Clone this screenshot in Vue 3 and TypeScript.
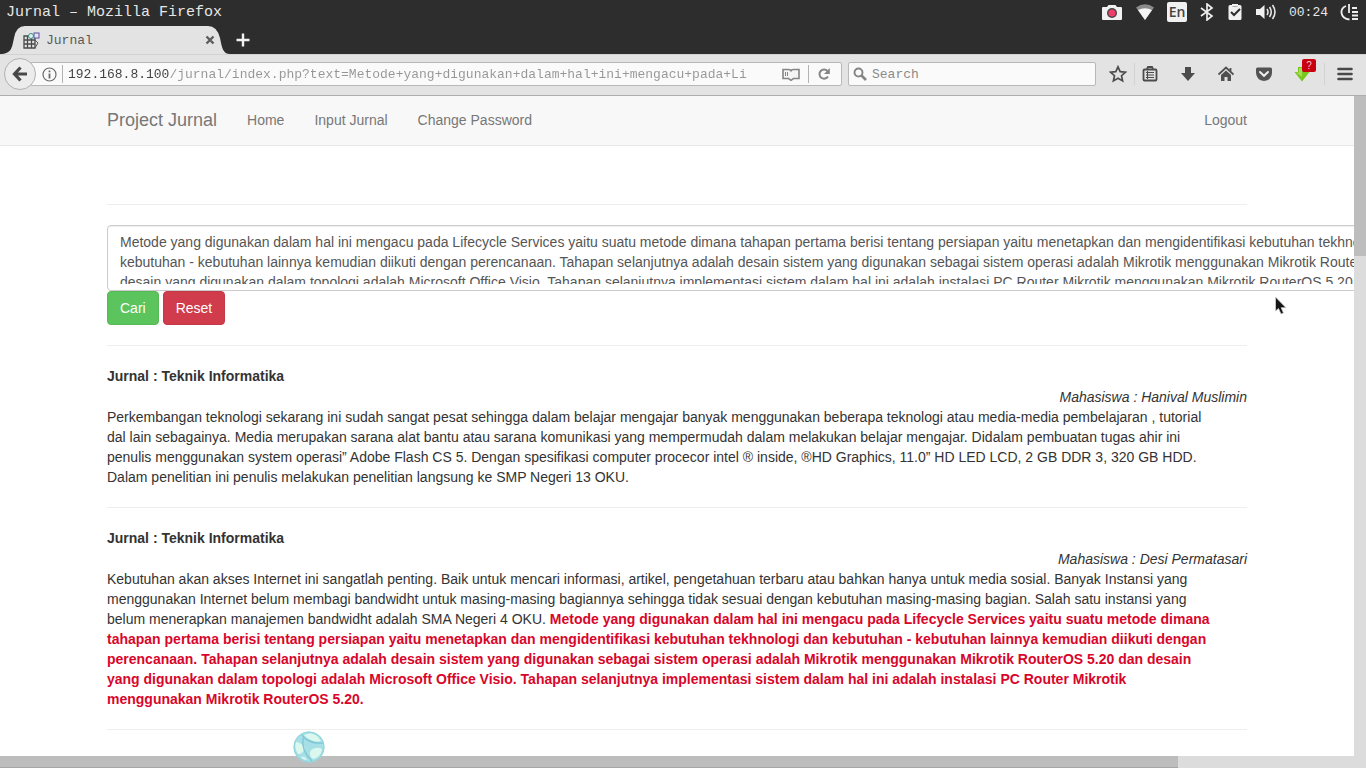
<script setup lang="ts">
import { ref } from 'vue'

interface Journal {
  title: string
  student: string
  text: string
  match?: string
}

const address = ref('192.168.8.100/jurnal/index.php?text=Metode+yang+digunakan+dalam+hal+ini+mengacu+pada+Li')
const search = ref('')
const query = ref(`Metode yang digunakan dalam hal ini mengacu pada Lifecycle Services yaitu suatu metode dimana tahapan pertama berisi tentang persiapan yaitu menetapkan dan mengidentifikasi kebutuhan tekhnologi dan
kebutuhan - kebutuhan lainnya kemudian diikuti dengan perencanaan. Tahapan selanjutnya adalah desain sistem yang digunakan sebagai sistem operasi adalah Mikrotik menggunakan Mikrotik RouterOS 5.20 dan
desain yang digunakan dalam topologi adalah Microsoft Office Visio. Tahapan selanjutnya implementasi sistem dalam hal ini adalah instalasi PC Router Mikrotik menggunakan Mikrotik RouterOS 5.20.`)

const links = ['Home', 'Input Jurnal', 'Change Password']

const journals: Journal[] = [
  {
    title: 'Jurnal : Teknik Informatika',
    student: 'Mahasiswa : Hanival Muslimin',
    text: `Perkembangan teknologi sekarang ini sudah sangat pesat sehingga dalam belajar mengajar banyak menggunakan beberapa teknologi atau media-media pembelajaran , tutorial
dal lain sebagainya. Media merupakan sarana alat bantu atau sarana komunikasi yang mempermudah dalam melakukan belajar mengajar. Didalam pembuatan tugas ahir ini
penulis menggunakan system operasi” Adobe Flash CS 5. Dengan spesifikasi computer procecor intel ® inside, ®HD Graphics, 11.0” HD LED LCD, 2 GB DDR 3, 320 GB HDD.
Dalam penelitian ini penulis melakukan penelitian langsung ke SMP Negeri 13 OKU.`,
  },
  {
    title: 'Jurnal : Teknik Informatika',
    student: 'Mahasiswa : Desi Permatasari',
    text: `Kebutuhan akan akses Internet ini sangatlah penting. Baik untuk mencari informasi, artikel, pengetahuan terbaru atau bahkan hanya untuk media sosial. Banyak Instansi yang
menggunakan Internet belum membagi bandwidht untuk masing-masing bagiannya sehingga tidak sesuai dengan kebutuhan masing-masing bagian. Salah satu instansi yang
belum menerapkan manajemen bandwidht adalah SMA Negeri 4 OKU.`,
    match: `Metode yang digunakan dalam hal ini mengacu pada Lifecycle Services yaitu suatu metode dimana
tahapan pertama berisi tentang persiapan yaitu menetapkan dan mengidentifikasi kebutuhan tekhnologi dan kebutuhan - kebutuhan lainnya kemudian diikuti dengan
perencanaan. Tahapan selanjutnya adalah desain sistem yang digunakan sebagai sistem operasi adalah Mikrotik menggunakan Mikrotik RouterOS 5.20 dan desain
yang digunakan dalam topologi adalah Microsoft Office Visio. Tahapan selanjutnya implementasi sistem dalam hal ini adalah instalasi PC Router Mikrotik
menggunakan Mikrotik RouterOS 5.20.`,
  },
]
</script>

<template>
  <div class="window">
    <header class="panel">
      <span class="panel-title">Jurnal – Mozilla Firefox</span>
      <div class="indicators">
        <svg width="22" height="18" viewBox="0 0 22 18">
          <path d="M2 4h4l1.500-2h7L16 4h4q1 0 1 1v11q0 1-1 1H2q-1 0-1-1V5q0-1 1-1z" fill="#f1f1f1" />
          <circle cx="11" cy="10" r="5" fill="#444" />
          <circle cx="11" cy="10" r="3.600" fill="#ee3f6b" />
        </svg>
        <svg width="20" height="18" viewBox="0 0 20 18">
          <path d="M1 4.500Q10-2 19 4.500L10 17z" fill="#8b8b8b" />
          <path d="M3 7Q10 3.500 17 7L10 17z" fill="#f4f4f4" />
        </svg>
        <span class="keyboard">En</span>
        <svg width="16" height="18" viewBox="0 0 16 18" fill="none" stroke="#eee" stroke-width="1.700">
          <path d="M2 5l11 8-5 4V1l5 4-11 8" />
        </svg>
        <svg width="16" height="18" viewBox="0 0 16 18">
          <path d="M3 2h2V1h6v1h2q1.500 0 1.500 1.500v12Q14.500 17 13 17H3q-1.500 0-1.500-1.500v-12Q1.500 2 3 2z" fill="#f1f1f1" />
          <path d="M4 9l3 3 6-6" fill="none" stroke="#2d2d2d" stroke-width="2" />
          <path d="M5.500 3.500h5" stroke="#aaa" />
        </svg>
        <svg width="22" height="18" viewBox="0 0 22 18">
          <path d="M1 6h4l4.500-4v14L5 12H1z" fill="#f1f1f1" />
          <path d="M12 6q2 3 0 6M14.500 4q3.500 5 0 10M17.500 2q5 7 0 14" fill="none" stroke="#e4e4e4" stroke-width="1.600" />
        </svg>
        <time class="clock">00:24</time>
        <svg width="20" height="18" viewBox="0 0 20 18" fill="none" stroke="#eee" stroke-width="1.800">
          <path d="M6 3Q1 5 1.500 10q1 6 8 6.500M9 1v9M12 5h5M12 9h6M12 12.500h6M12 16h6" />
        </svg>
      </div>
    </header>

    <div class="tabs">
      <div class="tab">
        <svg class="tab-shape" width="230" height="28" viewBox="0 0 230 28" preserveAspectRatio="none">
          <path d="M0 28C12 28 12 21 14 12Q16 0 25 0H208Q217 0 220 12C222 22 223 28 230 28z" fill="#e3e3e3" />
        </svg>
        <svg class="favicon" width="17" height="17" viewBox="0 0 17 17" fill="none">
          <path d="M1 4h11v12H1zM1 8h11M1 12h11M4.500 4v12M8.500 4v12" stroke="#4a4a4a" stroke-width="1.300" />
          <rect x="11" y="1" width="5" height="5" fill="#e6e3f5" stroke="#58519c" />
          <circle cx="8" cy="4" r="2.500" fill="#d9f0ed" stroke="#3c8f86" />
          <path d="M12 8l3 3-3 5" stroke="#555" />
        </svg>
        <span class="tab-title">Jurnal</span>
        <button class="plain" aria-label="Close tab">
          <svg width="10" height="10" viewBox="0 0 10 10" stroke="#5d5d5d" stroke-width="2.400"><path d="M1.500 1.500l7 7M8.500 1.500l-7 7" /></svg>
        </button>
      </div>
      <button class="plain" aria-label="New tab">
        <svg width="14" height="14" viewBox="0 0 14 14" stroke="#f2f2f2" stroke-width="2.400"><path d="M7 0.500v13M0.500 7h13" /></svg>
      </button>
    </div>

    <div class="toolbar">
      <button class="back" aria-label="Back">
        <svg width="16" height="16" viewBox="0 0 16 16" fill="none" stroke="#484848" stroke-width="3.200"><path d="M15 8H3M8.500 1.500L2.500 8l6 6.500" /></svg>
      </button>
      <div class="address">
        <svg width="15" height="15" viewBox="0 0 15 15" fill="none" stroke="#6c6c6c">
          <circle cx="7.500" cy="7.500" r="6.500" stroke-width="1.200" />
          <path d="M7.500 6.500v5M7.500 3.500v1.800" stroke-width="1.800" />
        </svg>
        <span class="rule"></span>
        <input v-model="address" class="url" aria-label="Address" />
        <svg width="18" height="13" viewBox="0 0 18 13" fill="#f4f4f4" stroke="#858585" stroke-width="1.600">
          <path d="M1 1.500h5.500Q9 1.500 9 3.500q0-2 2.500-2H17v9h-5.500L9 12.300 6.500 10.500H1z" />
          <path d="M3.500 4v4M5.500 4v4" stroke-width="1" />
        </svg>
        <span class="rule short"></span>
        <button class="plain" aria-label="Reload">
          <svg width="14" height="14" viewBox="0 0 14 14" fill="none"><path d="M11 9.500A4.600 4.600 0 1 1 10.500 4" stroke="#858585" stroke-width="2" /><path d="M12.800 1v6H7z" fill="#858585" /></svg>
        </button>
      </div>
      <div class="search">
        <svg width="14" height="14" viewBox="0 0 14 14" fill="none" stroke="#858585"><circle cx="5.500" cy="5.500" r="4" stroke-width="1.900" /><path d="M8.500 8.500l4.500 4.500" stroke-width="2.600" /></svg>
        <input v-model="search" placeholder="Search" aria-label="Search" />
      </div>
      <div class="tools">
        <button class="plain" aria-label="Bookmark">
          <svg width="18" height="18" viewBox="0 0 18 18" fill="none" stroke="#4c4c4c" stroke-width="1.700"><path d="M9 1.800l2.200 4.800 5.200.6-3.900 3.500 1.100 5.200L9 13.300l-4.600 2.600 1.100-5.200L1.600 7.200l5.200-.6z" /></svg>
        </button>
        <span class="divider"></span>
        <button class="plain" aria-label="Bookmarks list">
          <svg width="16" height="16" viewBox="0 0 16 16" fill="none" stroke="#4c4c4c"><rect x="1.500" y="3.500" width="13" height="11" rx="1" stroke-width="1.800" /><path d="M5 3l1-2h4l1 2" stroke-width="1.800" /><path d="M4 6.500h8M4 9h8M4 11.500h8M5.500 5v8" stroke-width="1.100" /></svg>
        </button>
        <button class="plain" aria-label="Downloads">
          <svg width="16" height="16" viewBox="0 0 16 16" fill="#4c4c4c"><path d="M5 1h6v6h4L8 15 1 7h4z" /></svg>
        </button>
        <button class="plain" aria-label="Home page">
          <svg width="16" height="16" viewBox="0 0 16 16"><path d="M.5 8.500L8 1.500l7.500 7M12.500 2v3" fill="none" stroke="#505050" stroke-width="1.800" /><path d="M3 9l5-4.500L13 9v6H9.500v-4h-3v4H3z" fill="#505050" /></svg>
        </button>
        <button class="plain" aria-label="Pocket">
          <svg width="16" height="16" viewBox="0 0 16 16"><path d="M1.500 1.500h13q1.500 0 1.500 1.500v4q-.5 7-8 8-7.500-1-8-8V3q0-1.500 1.500-1.500z" fill="#535353" /><path d="M4 6l4 3.800L12 6" fill="none" stroke="#eee" stroke-width="2" stroke-linecap="round" /></svg>
        </button>
        <button class="plain addon" aria-label="Download helper">
          <svg width="16" height="16" viewBox="0 0 16 16"><path d="M4 1h8v5h3.500L8 15.500.5 6H4z" fill="#78c51c" /><path d="M5 2h3v9L2 6.500h3z" fill="#a5dd58" /></svg>
          <span class="badge">?</span>
        </button>
        <button class="plain menu" aria-label="Menu">
          <svg width="16" height="14" viewBox="0 0 16 14" stroke="#484848" stroke-width="2.600" stroke-linecap="round"><path d="M1.500 2h13M1.500 7h13M1.500 12h13" /></svg>
        </button>
      </div>
    </div>

    <div class="view">
      <main class="page">
        <nav class="navbar">
          <div class="container nav-row">
            <a class="brand" href="#">Project Jurnal</a>
            <a v-for="link in links" :key="link" href="#">{{ link }}</a>
            <a class="logout" href="#">Logout</a>
          </div>
        </nav>
        <div class="container body">
          <hr />
          <form @submit.prevent>
            <div class="query">
              <textarea v-model="query" wrap="off" aria-label="Teks"></textarea>
            </div>
            <div class="actions">
              <button class="btn green" type="submit">Cari</button>
              <button class="btn red" type="button" @click="query = ''">Reset</button>
            </div>
          </form>
          <hr />
          <template v-for="(item, i) in journals" :key="i">
            <article>
              <h2>{{ item.title }}</h2>
              <p class="student">{{ item.student }}</p>
              <p class="abstract">{{ item.text }} <b v-if="item.match">{{ item.match }}</b></p>
            </article>
            <hr />
          </template>
        </div>
      </main>
      <div class="vbar"><div class="vthumb"></div></div>
      <div class="hbar"><div class="hthumb"></div></div>
    </div>

    <svg class="globe" width="34" height="34" viewBox="0 0 34 34">
      <circle cx="17" cy="17" r="15.500" fill="#a6e0e6" />
      <path d="M12 5q8-4 14 2l3 4q-6 2-10-1-5-2-7-5zM4 12q6 1 9 6-2 6-7 6-4-6-2-12zM19 20q6-4 11-1-1 8-9 10-5-3-2-9zM9 27q4-1 6 3-4 0-6-3z" fill="#dcf8ee" />
      <path d="M10 5q6 9 21 8M11 8Q9 21 20 31" fill="none" stroke="#7fc6d6" stroke-width="1.400" />
      <circle cx="17" cy="17" r="15" fill="none" stroke="#8fd3dc" />
    </svg>
    <svg class="cursor" width="14" height="20" viewBox="0 0 14 20">
      <path d="M1.500 1v14l3-2.500 2.500 5.500 2.500-1-2.300-5.300H12z" fill="#161616" stroke="#d0d0d0" stroke-width=".8" />
    </svg>
  </div>
</template>

<style>
body {
  margin: 0;
  overflow: hidden;
}
</style>

<style scoped>
* {
  box-sizing: border-box;
}
.window {
  position: relative;
  display: flex;
  flex-direction: column;
  height: 100vh;
  overflow: hidden;
  background: #fff;
  color: #333;
  font: 14px/20px "Liberation Sans", Arial, sans-serif;
}
svg {
  display: block;
  flex: none;
}
.plain {
  display: flex;
  padding: 0;
  border: 0;
  background: none;
}
.panel {
  display: flex;
  align-items: center;
  justify-content: space-between;
  height: 26px;
  padding: 0 6px 2px;
  background: #2d2d2d;
  color: #e6e6e6;
  font-family: "Liberation Mono", monospace;
}
.panel-title,
.tab-title,
.clock {
  padding-top: 2px;
}
.panel-title {
  font-size: 15px;
}
.indicators {
  display: flex;
  align-items: center;
  gap: 12px;
}
.keyboard {
  width: 20px;
  border-radius: 2px;
  background: #f1f1f1;
  color: #444;
  font: 600 14px/20px "Open Sans", sans-serif;
  text-align: center;
}
.clock {
  font-size: 13px;
}
.tabs {
  display: flex;
  align-items: center;
  gap: 6px;
  height: 28px;
  background: #2d2d2d;
}
.tab {
  position: relative;
  display: flex;
  align-items: center;
  gap: 6px;
  width: 230px;
  height: 28px;
  padding: 0 15px 0 23px;
  color: #5a5a5a;
  font-family: "Liberation Mono", monospace;
  font-size: 13px;
}
.tab-shape {
  position: absolute;
  inset: 0;
}
.favicon,
.tab-title,
.tab .plain {
  position: relative;
}
.tab-title {
  flex: 1;
}
.toolbar {
  display: flex;
  align-items: center;
  height: 42px;
  padding: 0 13px 2px 4px;
  border-top: 1px solid #d2d2d2;
  border-bottom: 1px solid #adadad;
  background: #e3e3e3;
}
.back {
  z-index: 1;
  display: flex;
  align-items: center;
  justify-content: center;
  width: 32px;
  height: 32px;
  padding: 0;
  border: 1px solid #b1b1b1;
  border-radius: 50%;
  background: #ececec;
}
.address,
.search {
  display: flex;
  align-items: center;
  height: 24px;
  border: 1px solid #b8b8b8;
  border-radius: 2px;
  background: #fafafa;
}
.address {
  flex: 1;
  gap: 5px;
  margin: 0 6px 0 -6px;
  padding: 0 10px 0 11px;
}
.rule {
  width: 1px;
  height: 18px;
  background: #b3b3b3;
}
.rule.short {
  margin: 0 3px;
}
input {
  min-width: 0;
  flex: 1;
  padding: 2px 0 0;
  border: 0;
  outline: 0;
  background: none;
  font: 13px/20px "Liberation Mono", monospace;
  color: #555;
}
.url {
  background: linear-gradient(90deg, #3f3f3f 101px, #969696 101px);
  background-clip: text;
  -webkit-text-fill-color: transparent;
}
.search {
  flex: 0 1 248px;
  gap: 5px;
  padding: 0 4px;
}
input::placeholder {
  color: #8a8a8a;
  opacity: 1;
}
.tools {
  display: flex;
  align-items: center;
  gap: 22px;
  margin-left: 13px;
}
.divider {
  width: 1px;
  height: 22px;
  margin: 0 -15px;
  background: #d3d3d3;
}
.addon {
  position: relative;
  margin-right: 2px;
}
.menu {
  padding: 4px 0 4px 12px;
  border-left: 1px solid #d3d3d3;
  margin-left: -10px;
}
.badge {
  position: absolute;
  top: -7px;
  left: 8px;
  width: 14px;
  border-radius: 2px;
  background: #c8000f;
  color: #f3c2c6;
  font: 10px/13px "Liberation Sans", sans-serif;
  text-align: center;
}
.view {
  display: grid;
  flex: 1;
  min-height: 0;
  grid-template-columns: minmax(0, 1fr) 12px;
  grid-template-rows: minmax(0, 1fr) 12px;
}
.page {
  overflow: hidden;
}
.container {
  width: calc(100% - 214px);
  max-width: 1140px;
  margin: 0 auto;
}
.navbar {
  height: 50px;
  border-bottom: 1px solid #e7e7e7;
  background: #f8f8f8;
}
.nav-row {
  display: flex;
  align-items: center;
  gap: 30px;
  height: 48px;
}
.nav-row a {
  color: #777;
  text-decoration: none;
}
.nav-row .brand {
  font-size: 18px;
}
.nav-row .logout {
  margin-left: auto;
}
.body {
  padding-top: 38px;
}
hr {
  margin: 20px 0;
  border: 0;
  border-top: 1px solid #eee;
}
.query {
  width: 126%;
  height: 66px;
  padding: 6px 12px;
  border: 1px solid #ccc;
  border-radius: 4px;
  background: #fff;
  box-shadow: inset 0 1px 1px #eee;
}
textarea {
  display: block;
  width: 100%;
  height: 100%;
  padding: 0;
  overflow: hidden;
  border: 0;
  outline: 0;
  background: none;
  color: #555;
  font: 14px/20px "Liberation Sans", Arial, sans-serif;
  resize: none;
}
.actions {
  display: flex;
  gap: 4px;
}
.btn {
  height: 34px;
  padding: 0 12px;
  border: 1px solid;
  border-radius: 4px;
  color: #fff;
  font: 14px/20px "Liberation Sans", Arial, sans-serif;
}
.green {
  border-color: #55b955;
  background: #5cc45c;
}
.red {
  border-color: #c43848;
  background: #d03c4c;
}
h2,
p {
  margin: 0;
  font-size: 14px;
  line-height: 20px;
}
h2 {
  line-height: 21px;
}
.student {
  font-style: italic;
  text-align: right;
}
.abstract {
  white-space: pre-line;
}
b {
  color: #d9062a;
}
.vbar,
.hbar {
  background: #dcdcdc;
}
.vthumb {
  height: 160px;
  background: #bdbdbd;
}
.hbar {
  grid-column: 1 / -1;
}
.hthumb {
  width: 87%;
  max-width: 1178px;
  height: 12px;
  border-bottom: 1px solid #a5a5a5;
  background: #bdbdbd;
}
.globe {
  position: absolute;
  left: 292px;
  bottom: 4px;
}
.cursor {
  position: absolute;
  left: 1274px;
  top: 296px;
}
</style>
